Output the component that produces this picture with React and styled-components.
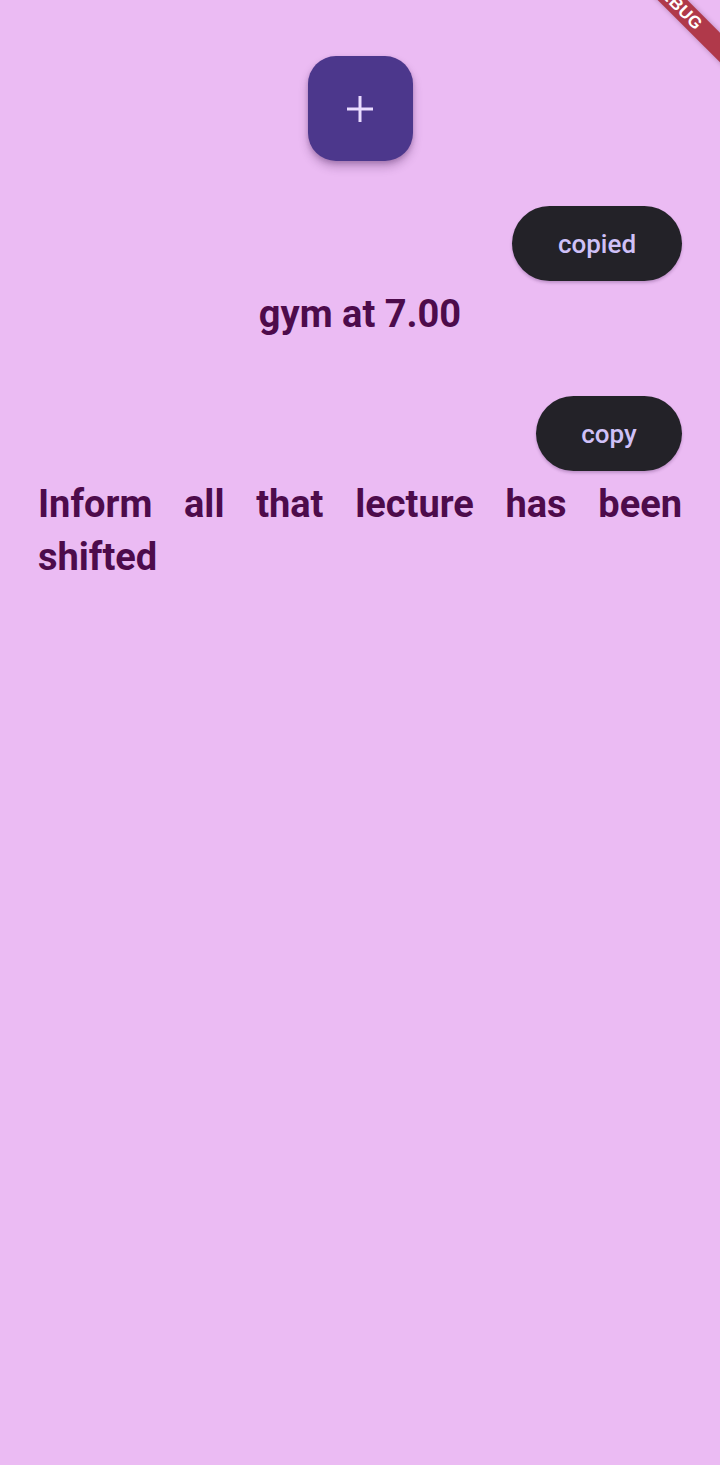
import React from "react";
import styled, { createGlobalStyle } from "styled-components";

const Global = createGlobalStyle`
  html, body { margin: 0; padding: 0; }
  body {
    background: #ebbbf3;
    font-family: Roboto, "Noto Sans", sans-serif;
  }
`;

const Page = styled.div`
  position: relative;
  min-height: 1465px;
  background: #ebbbf3;
  overflow: hidden;
  display: flex;
  flex-direction: column;
  align-items: center;
  padding: 56px 38px 0;
  box-sizing: border-box;
`;

const Fab = styled.button`
  width: 105px;
  height: 105px;
  border: none;
  border-radius: 28px;
  background: #4c378c;
  box-shadow: 0 6px 10px rgba(60, 20, 80, 0.28), 0 2px 4px rgba(60, 20, 80, 0.2);
  display: flex;
  align-items: center;
  justify-content: center;
  padding: 0;
  cursor: pointer;
`;

const Note = styled.div`
  align-self: stretch;
  display: flex;
  flex-direction: column;
  margin-top: ${(p) => p.$top}px;
`;

const ChipRow = styled.div`
  display: flex;
  justify-content: flex-end;
`;

const Chip = styled.button`
  height: 75px;
  width: ${(p) => p.$w}px;
  border: none;
  border-radius: 38px;
  background: #232228;
  color: #cfc0f7;
  font-family: Roboto, "Noto Sans", sans-serif;
  font-weight: 500;
  font-size: 26px;
  box-shadow: 0 2px 3px rgba(60, 20, 80, 0.25);
  cursor: pointer;
`;

const NoteText = styled.p`
  margin: 6.5px 0 0;
  color: #4d0b4b;
  font-family: Roboto, "Noto Sans", sans-serif;
  font-weight: 700;
  font-size: 38px;
  line-height: 53px;
  text-align: ${(p) => p.$align};
  text-align-last: ${(p) => (p.$align === "justify" ? "left" : p.$align)};
`;

const Banner = styled.div`
  position: absolute;
  top: -6px;
  right: -37px;
  width: 160px;
  height: 21px;
  background: #b0394a;
  color: #fff;
  transform: rotate(45deg);
  display: flex;
  align-items: center;
  justify-content: center;
  font-family: "Liberation Sans", Arial, sans-serif;
  font-weight: 700;
  font-size: 17px;
  letter-spacing: 0.5px;
  box-shadow: 0 0 5px rgba(60, 0, 40, 0.3);
`;

export default function App() {
  return (
    <>
      <Global />
      <Page>
        <Fab aria-label="add">
          <svg width="30" height="30" viewBox="0 0 30 30">
            <path d="M15 2v26M2 15h26" stroke="#e9dcff" strokeWidth="3" fill="none" />
          </svg>
        </Fab>
        <Note $top={45}>
          <ChipRow>
            <Chip $w={170}>copied</Chip>
          </ChipRow>
          <NoteText $align="center">gym at 7.00</NoteText>
        </Note>
        <Note $top={55.5}>
          <ChipRow>
            <Chip $w={146}>copy</Chip>
          </ChipRow>
          <NoteText $align="justify">
            Inform all that lecture has been shifted
          </NoteText>
        </Note>
        <Banner>DEBUG</Banner>
      </Page>
    </>
  );
}
